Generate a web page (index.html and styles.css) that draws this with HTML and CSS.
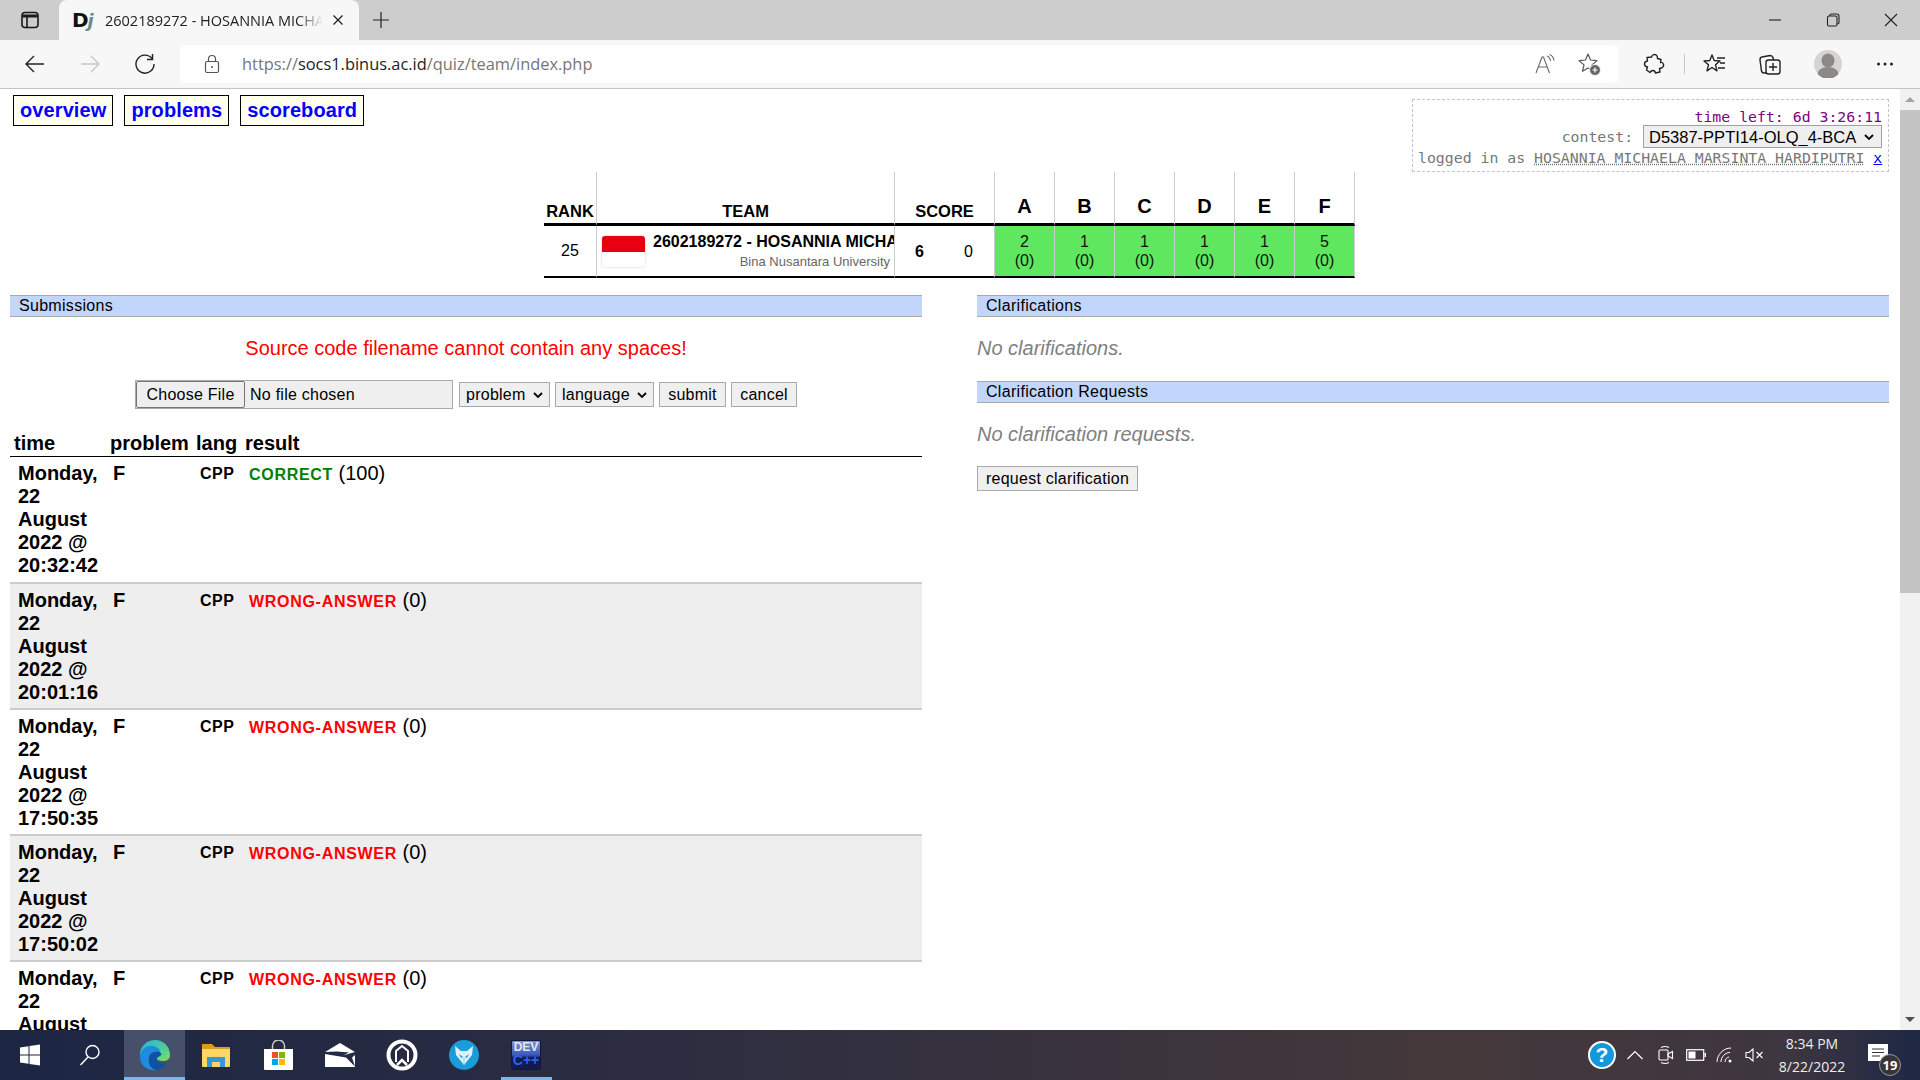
FILE: index.html
```html
<!DOCTYPE html>
<html lang="en">

<head>
    <meta charset="UTF-8">
    <meta name="viewport" content="width=device-width, initial-scale=1.0">
    <title>2602189272 - HOSANNIA MICHAELA MARSINTA HARDIPUTRI</title>
    <link rel="stylesheet" href="styles.css">
</head>

<body>
    <!-- browser chrome -->
    <div class="tabbar">
        <div class="tab-side">
            <svg width="20" height="20" viewBox="0 0 20 20" fill="none" stroke="#1a1a1a" stroke-width="1.6">
                <rect x="2" y="2.5" width="16" height="15" rx="3" />
                <path d="M2.5 6h15" stroke-width="3" />
                <path d="M7 6v11" />
            </svg>
        </div>
        <div class="tab">
            <span class="favicon">D<i>j</i></span>
            <span class="tab-title">2602189272 - HOSANNIA MICHAELA MARSINTA HARDIPUTRI</span>
            <svg class="tab-close" width="12" height="12" viewBox="0 0 12 12" stroke="#222" stroke-width="1.3">
                <path d="M1.5 1.5l9 9M10.500 1.500l-9 9" />
            </svg>
        </div>
        <div class="tab-new">
            <svg width="18" height="18" viewBox="0 0 18 18" stroke="#222" stroke-width="1.2">
                <path d="M9 1v16M1 9h16" />
            </svg>
        </div>
        <div class="win-controls">
            <div class="win-btn">
                <svg width="14" height="14" viewBox="0 0 14 14" stroke="#222" stroke-width="1.1">
                    <path d="M1 7h12" />
                </svg>
            </div>
            <div class="win-btn">
                <svg width="14" height="14" viewBox="0 0 14 14" fill="none" stroke="#222" stroke-width="1.1">
                    <rect x="1.5" y="3" width="9.5" height="10" rx="1.5" />
                    <path d="M4 3V2.200Q4 1 5.400 1h5.200Q13 1 13 3.200v6.600Q13 11 11 11" />
                </svg>
            </div>
            <div class="win-btn">
                <svg width="14" height="14" viewBox="0 0 14 14" stroke="#222" stroke-width="1.1">
                    <path d="M1 1l12 12M13 1L1 13" />
                </svg>
            </div>
        </div>
    </div>

    <div class="toolbar">
        <div class="tool tool-first">
            <svg width="22" height="22" viewBox="0 0 22 22" fill="none" stroke="#222" stroke-width="1.4">
                <path d="M20 11H2M10 3l-8 8 8 8" />
            </svg>
        </div>
        <div class="tool">
            <svg width="22" height="22" viewBox="0 0 22 22" fill="none" stroke="#c8c8c8" stroke-width="1.4">
                <path d="M2 11h18M12 3l8 8-8 8" />
            </svg>
        </div>
        <div class="tool">
            <svg width="22" height="22" viewBox="0 0 22 22" fill="none" stroke="#222" stroke-width="1.4">
                <path d="M18 5.500A9 9 0 1 0 20 11" />
                <path d="M18.500 1v5.500H13" />
            </svg>
        </div>
        <div class="address">
            <svg class="lock" width="16" height="20" viewBox="0 0 16 20" fill="none" stroke="#555" stroke-width="1.2">
                <rect x="1.5" y="7.5" width="13" height="11" rx="1.5" />
                <path d="M4.500 7.500V5a3.500 3.500 0 0 1 7 0v2.500" />
                <circle cx="8" cy="13" r="1" fill="#555" stroke="none" />
            </svg>
            <span class="url">https://<b>socs1.binus.ac.id</b>/quiz/team/index.php</span>
            <div class="addr-icons">
                <svg width="22" height="22" viewBox="0 0 22 22" fill="none" stroke="#666" stroke-width="1.1">
                    <path d="M2 20L8 4h1.500l6 16M4.500 14h9" />
                    <path d="M13 3q3 1 3.500 5M15.500 1.500q4 1.500 4.500 6" />
                </svg>
                <svg width="24" height="24" viewBox="0 0 24 24" fill="none" stroke="#555" stroke-width="1.2" stroke-linejoin="round">
                    <path d="M10 2l2.500 6 6.500.6-5 4.300 1.500 6.300L10 16l-5.500 3.200L6 12.900 1 8.600 7.500 8z" />
                    <circle cx="17" cy="18" r="5.500" fill="#666" stroke="#f7f7f7" stroke-width="1" />
                    <path d="M17 15.500v5M14.500 18h5" stroke="#fff" />
                </svg>
            </div>
        </div>
        <div class="tool tool-ext">
            <svg width="24" height="24" viewBox="0 0 24 24" fill="none" stroke="#222" stroke-width="1.4" stroke-linejoin="round">
                <path d="M9.500 5a3 3 0 0 1 5.500-1q.5 1 .5 2.500l3.500 1-.5 3q2.500-.5 3 2t-2 3.500l-2 .5.500 3.500-4.500 1q-.5-2.500-2.500-2.500t-3 2l-3.500-2.500 1-3q-3-.5-3-3t3-3l-.5-3.500z" />
            </svg>
        </div>
        <div class="tool-sep"></div>
        <div class="tool">
            <svg width="24" height="24" viewBox="0 0 24 24" fill="none" stroke="#222" stroke-width="1.4" stroke-linejoin="round">
                <path d="M9 3l2.200 5.500 5.800.5-4.500 3.800 1.500 6-5-3.300-5 3.300 1.500-6L1 9l5.800-.5z" />
                <path d="M14 6h8M17 11h5M15 16h7" />
            </svg>
        </div>
        <div class="tool">
            <svg width="24" height="24" viewBox="0 0 24 24" fill="none" stroke="#222" stroke-width="1.4">
                <rect x="8" y="8" width="14" height="14" rx="2.500" />
                <path d="M15 11v8M11 15h8" />
                <path d="M8 21H6Q4 21 3.500 19L2 8Q2 5 4 5l8-1.500q2.500 0 3 2L15.500 8" />
            </svg>
        </div>
        <div class="tool tool-avatar">
            <svg width="28" height="28" viewBox="0 0 28 28">
                <circle cx="14" cy="14" r="14" fill="#d6d4d2" />
                <ellipse cx="14" cy="10.500" rx="6.500" ry="7" fill="#8c8a88" />
                <path d="M3.500 24a10.500 7 0 0 1 21 0 14 14 0 0 1-21 0z" fill="#8c8a88" />
            </svg>
        </div>
        <div class="tool tool-more">
            <svg width="18" height="4" viewBox="0 0 18 4" fill="#222">
                <circle cx="2.500" cy="2" r="1.500" />
                <circle cx="9" cy="2" r="1.500" />
                <circle cx="15.500" cy="2" r="1.500" />
            </svg>
        </div>
    </div>

    <!-- page -->
    <div class="viewport">
        <div class="page">
            <div class="header">
                <nav class="menu">
                    <a href="#">overview</a>
                    <a href="#">problems</a>
                    <a href="#">scoreboard</a>
                </nav>
                <div class="contest-box">
                    <div class="time-left">time left: 6d 3:26:11</div>
                    <div class="contest-row">contest:
                        <select class="contest-select">
                            <option>D5387-PPTI14-OLQ_4-BCA</option>
                        </select>
                    </div>
                    <div class="user-row">logged in as <span class="username">HOSANNIA MICHAELA MARSINTA HARDIPUTRI</span> <a href="#">x</a></div>
                </div>
            </div>

            <table class="scoreboard">
                <thead>
                    <tr>
                        <th class="col-rank">RANK</th>
                        <th class="col-team">TEAM</th>
                        <th class="col-score">SCORE</th>
                        <th class="prob">A</th>
                        <th class="prob">B</th>
                        <th class="prob">C</th>
                        <th class="prob">D</th>
                        <th class="prob">E</th>
                        <th class="prob">F</th>
                    </tr>
                </thead>
                <tbody>
                    <tr>
                        <td class="rank">25</td>
                        <td class="team">
                            <div class="team-inner">
                                <div class="flag"></div>
                                <div class="team-text">
                                    <div class="team-name">2602189272 - HOSANNIA MICHAELA MARSINTA HARDIPUTRI</div>
                                    <div class="team-aff">Bina Nusantara University</div>
                                </div>
                            </div>
                        </td>
                        <td class="score"><div class="score-inner"><b>6</b><span>0</span></div></td>
                        <td class="solved">2<br>(0)</td>
                        <td class="solved">1<br>(0)</td>
                        <td class="solved">1<br>(0)</td>
                        <td class="solved">1<br>(0)</td>
                        <td class="solved">1<br>(0)</td>
                        <td class="solved">5<br>(0)</td>
                    </tr>
                </tbody>
            </table>

            <div class="columns">
                <section>
                    <h2 class="bar">Submissions</h2>
                    <p class="error">Source code filename cannot contain any spaces!</p>
                    <form class="submit-form">
                        <input class="file" type="file">
                        <select class="ctl ctl-select ctl-problem">
                            <option>problem</option>
                        </select>
                        <select class="ctl ctl-select ctl-language">
                            <option>language</option>
                        </select>
                        <button class="ctl ctl-submit" type="button">submit</button>
                        <button class="ctl ctl-cancel" type="button">cancel</button>
                    </form>

                    <table class="submissions">
                        <colgroup>
                            <col class="c-time">
                            <col class="c-problem">
                            <col class="c-lang">
                            <col>
                        </colgroup>
                        <thead>
                            <tr>
                                <th>time</th>
                                <th>problem</th>
                                <th>lang</th>
                                <th>result</th>
                            </tr>
                        </thead>
                        <tbody>
                            <tr>
                                <td class="s-time">Monday, 22 August 2022 @ 20:32:42</td>
                                <td class="s-prob">F</td>
                                <td class="s-lang">CPP</td>
                                <td><span class="correct">CORRECT</span> (100)</td>
                            </tr>
                            <tr>
                                <td class="s-time">Monday, 22 August 2022 @ 20:01:16</td>
                                <td class="s-prob">F</td>
                                <td class="s-lang">CPP</td>
                                <td><span class="wrong">WRONG-ANSWER</span> (0)</td>
                            </tr>
                            <tr>
                                <td class="s-time">Monday, 22 August 2022 @ 17:50:35</td>
                                <td class="s-prob">F</td>
                                <td class="s-lang">CPP</td>
                                <td><span class="wrong">WRONG-ANSWER</span> (0)</td>
                            </tr>
                            <tr>
                                <td class="s-time">Monday, 22 August 2022 @ 17:50:02</td>
                                <td class="s-prob">F</td>
                                <td class="s-lang">CPP</td>
                                <td><span class="wrong">WRONG-ANSWER</span> (0)</td>
                            </tr>
                            <tr>
                                <td class="s-time">Monday, 22 August 2022 @ 17:49:20</td>
                                <td class="s-prob">F</td>
                                <td class="s-lang">CPP</td>
                                <td><span class="wrong">WRONG-ANSWER</span> (0)</td>
                            </tr>
                        </tbody>
                    </table>
                </section>

                <section>
                    <h2 class="bar">Clarifications</h2>
                    <p class="none none-first">No clarifications.</p>
                    <h2 class="bar">Clarification Requests</h2>
                    <p class="none">No clarification requests.</p>
                    <button class="ctl ctl-request" type="button">request clarification</button>
                </section>
            </div>
        </div>

        <div class="scrollbar">
            <div class="scroll-btn"><span class="arrow-up"></span></div>
            <div class="scroll-thumb"></div>
            <div class="scroll-track"></div>
            <div class="scroll-btn"><span class="arrow-down"></span></div>
        </div>
    </div>

    <!-- windows taskbar -->
    <div class="taskbar">
        <div class="task task-start">
            <svg width="22" height="22" viewBox="0 0 22 22" fill="#fff">
                <path d="M1 3.500l8.500-1.200v8.200H1zM10.500 2.100L21 .6v9.900H10.500zM1 11.500h8.500v8.200L1 18.500zM10.500 11.500H21v9.900l-10.500-1.500z" />
            </svg>
        </div>
        <div class="task task-search">
            <svg width="22" height="22" viewBox="0 0 22 22" fill="none" stroke="#fff" stroke-width="1.400">
                <circle cx="13.500" cy="8" r="6.500" />
                <path d="M9 13L1.500 21" />
            </svg>
        </div>
        <div class="task task-edge active">
            <svg width="32" height="32" viewBox="0 0 32 32">
                <defs>
                    <linearGradient id="edgeTop" x1="0" y1="0" x2="1" y2="1">
                        <stop offset="0" stop-color="#27b0dc" />
                        <stop offset="0.7" stop-color="#56d38e" />
                        <stop offset="1" stop-color="#84dc50" />
                    </linearGradient>
                </defs>
                <path d="M1 16C1 7 8 1 16 1c9 0 15 7 15 15 0 4-3 6-7 6-3 0-6-1-6-2L8 10z" fill="url(#edgeTop)" />
                <path d="M1 17c1-7 7-11 13-10 5 1 8 4 7 7-4-2-10 0-11 5-1 6 3 11 9 12C9 33 0 26 1 17z" fill="#1c8be0" />
                <path d="M10 19c0-5 5-7 10-6 3 1 3 3 1 4-3 1-4 3-2 6 2 2 6 2 9 1-3 5-7 7-11 7-5-1-8-6-7-12z" fill="#12519f" />
            </svg>
        </div>
        <div class="task">
            <svg width="28" height="23" viewBox="0 0 28 23">
                <path d="M0 1q0-1 1-1h9l3 3h15v5H0z" fill="#dc9e14" />
                <path d="M0 5h28v17q0 1-1 1H1q-1 0-1-1z" fill="#fdd766" />
                <path d="M5 23V13h18v10h-5v-5h-8v5z" fill="#3a96dc" />
            </svg>
        </div>
        <div class="task">
            <svg width="29" height="30" viewBox="0 0 29 30">
                <path d="M8.500 10V6a6 6 0 0 1 12 0v4" fill="none" stroke="#c8c8c8" stroke-width="1.500" />
                <path d="M0 9h29v20q0 1-1 1H1q-1 0-1-1z" fill="#fff" />
                <rect x="8" y="12" width="6" height="6" fill="#f25022" />
                <rect x="15" y="12" width="6" height="6" fill="#7fba00" />
                <rect x="8" y="19" width="6" height="6" fill="#00a4ef" />
                <rect x="15" y="19" width="6" height="6" fill="#ffb900" />
            </svg>
        </div>
        <div class="task">
            <svg width="30" height="24" viewBox="0 0 30 24" fill="#fff">
                <path d="M0 9L15 0l15 9-12 3.500L24 9.500 12 8.500z" />
                <path d="M0 11l21 3.500 9 9-3-9 3-2.500v12H0z" />
            </svg>
        </div>
        <div class="task">
            <svg width="32" height="32" viewBox="0 0 32 32" fill="none" stroke="#fff">
                <circle cx="16" cy="16" r="13.500" stroke-width="4" />
                <path d="M10 23V12l6-5 6 5v11" stroke-width="2" />
                <path d="M11 26l5-5 5 5" stroke-width="2.500" />
            </svg>
        </div>
        <div class="task">
            <svg width="30" height="30" viewBox="0 0 30 30">
                <circle cx="15" cy="15" r="15" fill="#1b9bd7" />
                <path d="M6 6l6 5h6l6-5-1 9-8 10-8-10z" fill="#dcf2fb" />
                <path d="M10 14l4 3-2 1zM20 14l-4 3 2 1z" fill="#1b9bd7" />
                <path d="M15 17v8" stroke="#8fcfea" stroke-width="1" />
            </svg>
        </div>
        <div class="task task-dev running">
            <div class="dev-icon">
                <span class="dev-a">DEV</span>
                <span class="dev-b">C++</span>
            </div>
        </div>

        <div class="tray">
            <div class="tray-item w33">
                <svg width="28" height="28" viewBox="0 0 28 28">
                    <circle cx="14" cy="14" r="13" fill="#1597dc" stroke="#fff" stroke-width="2" />
                    <text x="14" y="21" text-anchor="middle" class="help-mark">?</text>
                </svg>
            </div>
            <div class="tray-item w33">
                <svg width="18" height="10" viewBox="0 0 18 10" fill="none" stroke="#fff" stroke-width="1.200">
                    <path d="M1.500 9L9 1.500 16.500 9" />
                </svg>
            </div>
            <div class="tray-item w30">
                <svg width="16" height="20" viewBox="0 0 16 20" fill="none" stroke="#fff" stroke-width="1.100">
                    <rect x="1" y="5" width="9" height="10" rx="1" />
                    <path d="M10 9l4.500-2.500v7L10 11z" />
                    <path d="M3 2.500q4-2 8 0M3 17.500q4 2 8 0" />
                </svg>
            </div>
            <div class="tray-item w29">
                <svg width="20" height="12" viewBox="0 0 20 12">
                    <rect x=".7" y=".7" width="17" height="10.600" fill="none" stroke="#fff" stroke-width="1.200" />
                    <rect x="2.500" y="2.500" width="7" height="7" fill="#fff" />
                    <rect x="18.500" y="4" width="1.500" height="4" fill="#fff" />
                </svg>
            </div>
            <div class="tray-item w30">
                <svg width="18" height="16" viewBox="0 0 18 16" fill="none" stroke="#fff" stroke-width="1">
                    <path d="M1 15C1 8 7 1 15 1" />
                    <path d="M5 15c0-5 4-9.500 9-9.500" />
                    <path d="M9 15c0-2.500 2-5 4-5" />
                    <circle cx="14" cy="14" r="1.500" fill="#fff" stroke="none" />
                </svg>
            </div>
            <div class="tray-item w29">
                <svg width="20" height="14" viewBox="0 0 20 14" fill="none" stroke="#fff" stroke-width="1.100">
                    <path d="M1 4.500h3L8 1v12L4 9.500H1z" />
                    <path d="M11.500 4l6 6M17.500 4l-6 6" />
                </svg>
            </div>
            <div class="clock">
                <div>8:34 PM</div>
                <div>8/22/2022</div>
            </div>
            <div class="notif">
                <svg width="20" height="18" viewBox="0 0 20 18">
                    <path d="M0 0h20v17H0z" fill="#fff" />
                    <path d="M4 5h12M4 8.500h12M4 12h8" stroke="#333" stroke-width="1" />
                </svg>
                <span class="notif-count">19</span>
            </div>
        </div>
    </div>
</body>

</html>
```

FILE: styles.css
```css
* {
    margin: 0;
    padding: 0;
    box-sizing: border-box;
}

html,
body {
    height: 100%;
    overflow: hidden;
}

body {
    display: flex;
    flex-direction: column;
    font-family: "Liberation Sans", Arial, sans-serif;
    background-color: #fff;
    color: #000;
}

/* Browser tab strip */
.tabbar {
    display: flex;
    align-items: stretch;
    height: 40px;
    flex-shrink: 0;
    background-color: #cdcdcd;
}

.tab-side {
    width: 59px;
    display: flex;
    justify-content: center;
    align-items: center;
}

.tab {
    width: 300px;
    display: flex;
    align-items: center;
    background-color: #f7f7f7;
    border-radius: 8px 8px 0 0;
    padding-left: 13px;
}

.favicon {
    width: 33px;
    font-family: "DejaVu Sans", sans-serif;
    font-weight: bold;
    font-size: 20px;
    letter-spacing: -1px;
    color: #111;
}

.favicon i {
    color: #6c8a8a;
    font-size: 18px;
}

.tab-title {
    width: 218px;
    white-space: nowrap;
    overflow: hidden;
    font-family: "Open Sans", sans-serif;
    font-size: 14.500px;
    color: #222;
    -webkit-mask-image: linear-gradient(90deg, #000 88%, transparent 100%);
    mask-image: linear-gradient(90deg, #000 88%, transparent 100%);
}

.tab-close {
    margin-left: 9px;
}

.tab-new {
    width: 43px;
    display: flex;
    justify-content: center;
    align-items: center;
}

.win-controls {
    margin-left: auto;
    display: flex;
}

.win-btn {
    width: 58px;
    display: flex;
    justify-content: center;
    align-items: center;
}

/* Browser toolbar */
.toolbar {
    display: flex;
    align-items: center;
    height: 49px;
    flex-shrink: 0;
    background-color: #f7f7f7;
    border-bottom: 1px solid #c4c4c4;
    padding-bottom: 1px;
}

.tool {
    width: 55px;
    flex-shrink: 0;
    display: flex;
    justify-content: center;
    align-items: center;
}

.tool-first {
    margin-left: 7px;
}

.tool-ext {
    margin-left: 7px;
}

.tool-sep {
    width: 1px;
    height: 20px;
    margin: 0 2px 0 3px;
    background-color: #c8c8c8;
}

.tool-avatar {
    margin-left: 3px;
}

.tool-more {
    margin-left: 2px;
}

.address {
    width: 1439px;
    height: 38px;
    margin-left: 8px;
    flex-shrink: 0;
    display: flex;
    align-items: center;
    background-color: #fff;
    border-radius: 6px;
    padding-left: 24px;
}

.url {
    margin-left: 22px;
    font-family: "Open Sans", sans-serif;
    font-size: 16.400px;
    color: #767676;
}

.url b {
    font-weight: normal;
    color: #222;
}

.addr-icons {
    margin-left: auto;
    margin-right: 17px;
    display: flex;
    align-items: center;
    gap: 22px;
}

/* Page area */
.viewport {
    flex: 1;
    min-height: 0;
    display: flex;
}

.page {
    flex: 1;
    min-width: 0;
    overflow: hidden;
    padding-right: 11px;
}

.header {
    display: flex;
    justify-content: space-between;
    align-items: flex-start;
    height: 83px;
}

.menu {
    display: flex;
    gap: 11px;
    margin: 6px 0 0 13px;
}

.menu a {
    display: block;
    height: 31px;
    padding: 0 6px;
    border: 1px solid #000;
    background-color: #ffffee;
    color: #0000ff;
    font-size: 20px;
    font-weight: bold;
    letter-spacing: 0.1px;
    line-height: 29px;
    text-decoration: none;
}

.contest-box {
    width: 477px;
    height: 73px;
    margin-top: 10px;
    padding: 9px 6px 0 5px;
    border: 1px dashed #c4c4c4;
    font-family: "DejaVu Sans Mono", monospace;
    font-size: 14.830px;
    color: #777;
    text-align: right;
}

.time-left {
    height: 15px;
    line-height: 15px;
    color: #800080;
}

.contest-row {
    height: 26px;
    line-height: 24px;
    margin-top: 1px;
}

.contest-select {
    appearance: none;
    width: 239px;
    height: 23px;
    margin-left: 1px;
    padding: 0 20px 0 5px;
    font-family: "Liberation Sans", Arial, sans-serif;
    font-size: 16.500px;
    background: #efefef url("data:image/svg+xml,%3Csvg xmlns='http://www.w3.org/2000/svg' width='10' height='6'%3E%3Cpath d='M1 1l4 4 4-4' fill='none' stroke='%23000' stroke-width='1.800'/%3E%3C/svg%3E") no-repeat right 7px center;
    border: 1px solid #a0a0a0;
    border-radius: 0;
    vertical-align: top;
}

.user-row {
    text-align: left;
    line-height: 18px;
    margin-top: -2px;
    white-space: nowrap;
}

.username {
    text-decoration: underline dotted;
}

.user-row a {
    color: #0000ff;
}

/* Scoreboard */
.scoreboard {
    width: 811px;
    margin: 0 0 0 544px;
    table-layout: fixed;
    border-collapse: separate;
    border-spacing: 0;
}

.scoreboard th {
    height: 54px;
    border-bottom: 3px solid #000;
    border-right: 1px solid #ccc;
    vertical-align: bottom;
    font-size: 16.500px;
    padding-bottom: 2px;
}

.scoreboard td {
    height: 52px;
    border-bottom: 2px solid #000;
    border-right: 1px solid #ccc;
    font-size: 16px;
    text-align: center;
    vertical-align: middle;
}

.col-rank {
    width: 53px;
}

.col-team {
    width: 298px;
}

.col-score {
    width: 100px;
}

.scoreboard th.prob {
    font-size: 20px;
    padding-bottom: 5px;
}

.team-inner {
    display: flex;
    align-items: center;
    padding-left: 5px;
    height: 50px;
    overflow: hidden;
}

.flag {
    width: 43px;
    height: 31px;
    flex-shrink: 0;
    border-radius: 3px;
    background: linear-gradient(#e7000f 50%, #fff 50%);
    box-shadow: 0 0 2px rgba(0, 0, 0, 0.25);
}

.team-text {
    min-width: 0;
    flex: 1;
    margin-left: 8px;
}

.team-name {
    font-weight: bold;
    white-space: nowrap;
    overflow: hidden;
    text-align: left;
    line-height: 20px;
    margin-top: -1px;
}

.team-aff {
    font-size: 13px;
    color: #666;
    text-align: right;
    line-height: 17px;
    padding-right: 4px;
    margin-top: 1px;
}

.score-inner {
    display: flex;
    justify-content: space-between;
    padding: 1px 21px 0 20px;
}

.scoreboard td.solved {
    background-color: #60e760;
    line-height: 19px;
    color: #111;
}

/* Two columns below the scoreboard */
.columns {
    display: grid;
    grid-template-columns: 912px 912px;
    gap: 55px;
    margin: 17px 0 0 10px;
}

.bar {
    height: 22px;
    padding-left: 9px;
    border-top: 1px solid #aaa;
    border-bottom: 1px solid #aaa;
    background-color: #c2d6fb;
    font-size: 16px;
    font-weight: normal;
    letter-spacing: 0.3px;
    line-height: 20px;
}

.error,
.none {
    margin: 20px 0;
    font-size: 20px;
    line-height: 23px;
}

.error {
    color: #ff0000;
    text-align: center;
}

.none {
    color: #808080;
    font-style: italic;
}

.none-first {
    margin-bottom: 21px;
}

.submit-form {
    display: flex;
    justify-content: center;
    align-items: center;
    gap: 5px;
    height: 29px;
}

.file {
    width: 318px;
    height: 29px;
    margin-right: 1px;
    border: 1px solid #a9a9a9;
    background-color: #efefef;
    font-family: "Liberation Sans", Arial, sans-serif;
    font-size: 16px;
    letter-spacing: 0.25px;
}

.file::file-selector-button {
    width: 109px;
    height: 27px;
    margin-right: 5px;
    border: 1px solid #767676;
    border-radius: 2px;
    background-color: #efefef;
    font-family: "Liberation Sans", Arial, sans-serif;
    font-size: 16px;
    letter-spacing: 0.25px;
}

.ctl {
    height: 25px;
    font-family: "Liberation Sans", Arial, sans-serif;
    font-size: 16px;
    letter-spacing: 0.25px;
    border: 1px solid #a9a9a9;
    border-radius: 0;
    background-color: #efefef;
    color: #000;
}

.ctl-select {
    appearance: none;
    padding: 0 18px 0 6px;
    background: #efefef url("data:image/svg+xml,%3Csvg xmlns='http://www.w3.org/2000/svg' width='10' height='6'%3E%3Cpath d='M1 1l4 4 4-4' fill='none' stroke='%23000' stroke-width='1.800'/%3E%3C/svg%3E") no-repeat right 6px center;
}

.ctl-problem {
    width: 91px;
}

.ctl-language {
    width: 99px;
}

.ctl-submit {
    width: 67px;
}

.ctl-cancel {
    width: 66px;
}

.ctl-request {
    width: 161px;
}

/* Submissions */
.submissions {
    width: 100%;
    margin-top: 23px;
    table-layout: fixed;
    border-collapse: collapse;
    font-size: 20px;
}

.c-time {
    width: 96px;
}

.c-problem {
    width: 86px;
}

.c-lang {
    width: 49px;
}

.submissions th {
    padding: 0 0 1px 4px;
    border-bottom: 1px solid #000;
    line-height: 23px;
    text-align: left;
    white-space: nowrap;
}

.submissions td {
    height: 126px;
    padding: 5px 0 0 8px;
    border-bottom: 2px solid #ccc;
    line-height: 23px;
    vertical-align: top;
}

.submissions tbody tr:nth-child(even) {
    background-color: #eee;
}

.s-time,
.s-prob {
    font-weight: bold;
}

.submissions td.s-prob {
    padding-left: 7px;
}

.submissions td.s-lang {
    font-size: 16px;
    font-weight: bold;
    letter-spacing: 0.5px;
}

.correct,
.wrong {
    font-size: 16px;
    font-weight: bold;
    letter-spacing: 0.7px;
}

.correct {
    color: #008000;
}

.wrong {
    color: #ff0000;
}

/* Page scrollbar */
.scrollbar {
    width: 20px;
    flex-shrink: 0;
    display: flex;
    flex-direction: column;
    background-color: #f1f1f1;
}

.scroll-btn {
    height: 21px;
    display: flex;
    justify-content: center;
    align-items: center;
}

.scroll-thumb {
    height: 483px;
    background-color: #c4c4c4;
}

.scroll-track {
    flex: 1;
}

.arrow-up,
.arrow-down {
    width: 0;
    height: 0;
    border-left: 5px solid transparent;
    border-right: 5px solid transparent;
}

.arrow-up {
    border-bottom: 5px solid #a3a3a3;
}

.arrow-down {
    border-top: 5px solid #505050;
}

/* Taskbar */
.taskbar {
    display: flex;
    align-items: stretch;
    height: 50px;
    flex-shrink: 0;
    background: linear-gradient(90deg, #1c2643 0%, #2a2c42 30%, #44383a 75%, #3e3640 93%, #1e2845 100%);
}

.task {
    width: 62px;
    position: relative;
    flex-shrink: 0;
    display: flex;
    justify-content: center;
    align-items: center;
}

.task-start {
    width: 60px;
}

.task-search {
    width: 60px;
    margin-right: 4px;
}

.task-edge {
    width: 61px;
}

.active {
    background-color: #47506a;
}

.active::after,
.running::after {
    content: "";
    position: absolute;
    bottom: 0;
    height: 3px;
    background-color: #76b9ed;
}

.active::after {
    left: 0;
    right: 0;
}

.running::after {
    left: 6px;
    right: 5px;
}

.dev-icon {
    width: 30px;
    height: 30px;
    display: flex;
    flex-direction: column;
    align-items: center;
    background: linear-gradient(#8094cc, #3a58c0 50%, #101a58 60%, #141c4c);
    border: 1px solid #10183c;
    border-radius: 2px;
    font-family: "Liberation Sans", Arial, sans-serif;
    font-weight: bold;
    font-size: 12px;
    line-height: 13px;
}

.dev-a {
    color: #e6e6f0;
}

.dev-b {
    color: #2a64e8;
    font-size: 14px;
}

.tray {
    margin-left: auto;
    margin-right: 19px;
    display: flex;
    align-items: center;
    color: #fff;
}

.tray-item {
    display: flex;
    justify-content: center;
    align-items: center;
    height: 100%;
}

.w33 {
    width: 33px;
}

.w30 {
    width: 30px;
}

.w29 {
    width: 29px;
}

.help-mark {
    font-family: "Liberation Sans", Arial, sans-serif;
    font-size: 21px;
    font-weight: bold;
    fill: #fff;
}

.clock {
    width: 86px;
    font-family: "Open Sans", sans-serif;
    font-size: 14px;
    line-height: 23px;
    text-align: center;
    color: #eee;
}

.notif {
    width: 46px;
    height: 100%;
    position: relative;
    display: flex;
    justify-content: center;
    align-items: center;
    padding-bottom: 4px;
}

.notif-count {
    position: absolute;
    left: 24px;
    top: 24px;
    width: 22px;
    height: 22px;
    border: 1px solid #9a9a9a;
    border-radius: 50%;
    background-color: #3a3436;
    font-family: "Open Sans", sans-serif;
    font-size: 13px;
    font-weight: bold;
    line-height: 20px;
    text-align: center;
}
```
